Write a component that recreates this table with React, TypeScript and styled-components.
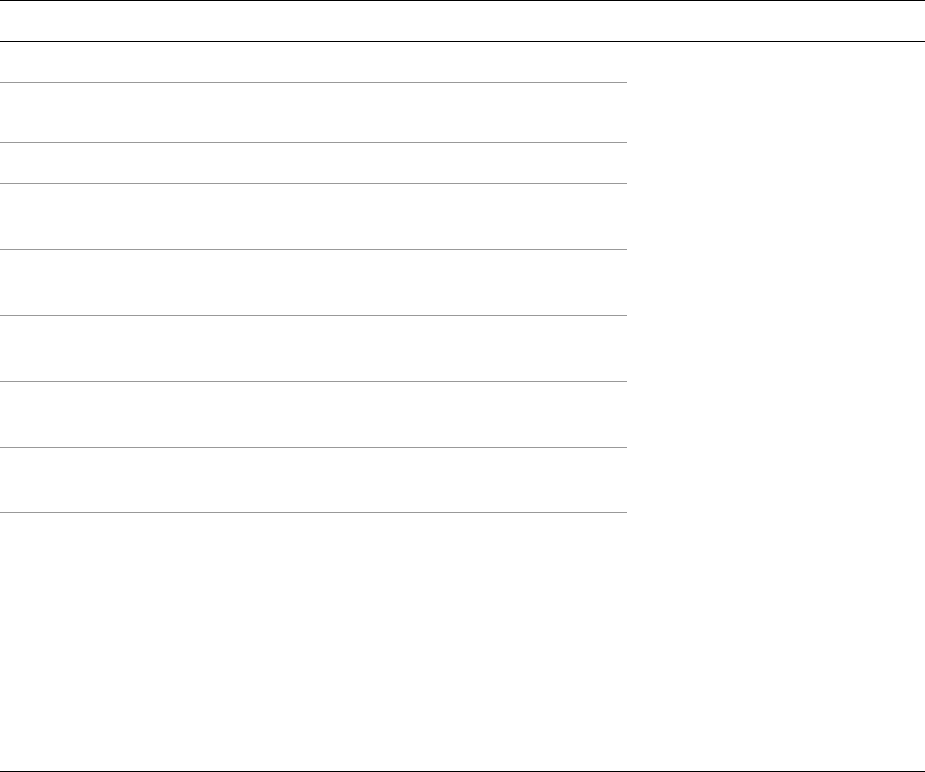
import React from "react";
import styled, { createGlobalStyle } from "styled-components";

const GlobalStyle = createGlobalStyle`
  html, body {
    margin: 0;
    padding: 0;
    background: #ffffff;
    font-family: "Liberation Sans", Arial, sans-serif;
  }
`;

/* ------------------------ PAGE ---------------------- */

const Page = styled.div`
  display: flex;
  flex-direction: column;
  width: 925px;
  height: 772px;
  box-sizing: border-box;
  border-top: 1px solid #000000;
  border-bottom: 1px solid #000000;
`;

const Header = styled.header`
  height: 40px;
  border-bottom: 1px solid #000000;
`;

const Main = styled.main`
  flex: 1;
  display: grid;
  grid-template-columns: 627px 1fr;
  align-items: start;
  padding-top: 40px;
`;

/* ------------------------ LIST ---------------------- */

const List = styled.ul`
  list-style: none;
  margin: 0;
  padding: 0;
  border-bottom: 1px solid #999999;
`;

const Row = styled.li<{ $height: number }>`
  height: ${(props) => props.$height}px;
  box-sizing: border-box;
  border-top: 1px solid #999999;
`;

const Aside = styled.aside``;

const ROWS = [60, 41, 66, 66, 65.5, 66, 65.5];

export default function App() {
  return (
    <>
      <GlobalStyle />
      <Page>
        <Header />
        <Main>
          <List>
            {ROWS.map((h, i) => (
              <Row key={i} $height={h} />
            ))}
          </List>
          <Aside />
        </Main>
      </Page>
    </>
  );
}
